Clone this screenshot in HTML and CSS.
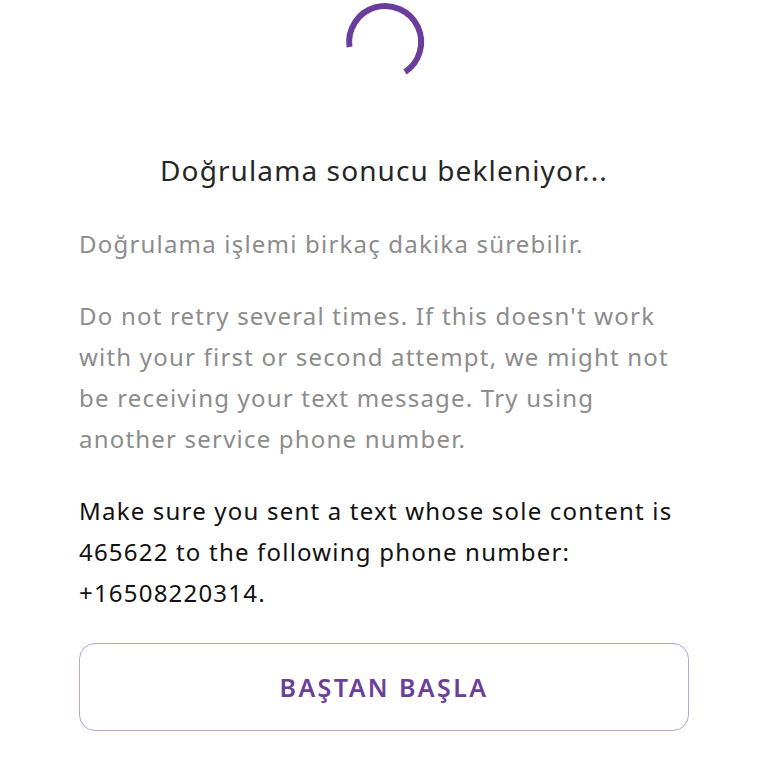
FILE: index.html
```html
<!DOCTYPE html>
<html lang="tr">
<head>
<meta charset="utf-8">
<link rel="stylesheet" href="styles.css">
</head>
<body>
<main class="page">
  <div class="spinner-wrap">
    <svg class="spinner" width="84" height="84" viewBox="0 0 84 84">
      <path d="M 6.5 47 A 36 36 0 1 1 62 72" fill="none" stroke="#6a3d9c" stroke-width="6" stroke-linecap="butt"/>
    </svg>
  </div>
  <h1 class="title">Doğrulama sonucu bekleniyor...</h1>
  <p class="muted">Doğrulama işlemi birkaç dakika sürebilir.</p>
  <p class="muted">Do not retry several times. If this doesn't work with your first or second attempt, we might not be receiving your text message. Try using another service phone number.</p>
  <p class="dark">Make sure you sent a text whose sole content is 465622 to the following phone number: +16508220314.</p>
  <button class="restart">BAŞTAN BAŞLA</button>
</main>
</body>
</html>
```

FILE: styles.css
```css
html, body {
  margin: 0;
  padding: 0;
  background: #ffffff;
}
.page {
  font-family: "Noto Sans", "Open Sans", sans-serif;
  padding: 0 79px;
  display: flex;
  flex-direction: column;
}
.spinner-wrap {
  display: flex;
  justify-content: center;
  height: 84px;
}
.spinner {
  display: block;
  margin-left: 1px;
}
.title {
  margin: 66px 0 0;
  font-size: 28px;
  font-weight: 400;
  line-height: 40px;
  letter-spacing: 1.1px;
  color: #262626;
  text-align: center;
}
.muted, .dark {
  font-size: 24px;
  line-height: 41px;
  letter-spacing: 1.2px;
  margin: 0;
}
.muted {
  color: #8c8c8c;
}
.title + .muted {
  margin-top: 33px;
}
.muted + .muted {
  margin-top: 31px;
}
.dark {
  color: #111111;
  margin-top: 31px;
}
.restart {
  margin-top: 30px;
  height: 88px;
  width: 100%;
  background: #fff;
  border: 1.5px solid #b9a3cf;
  border-radius: 16px;
  font-family: "Noto Sans", "Open Sans", sans-serif;
  font-size: 25px;
  font-weight: 600;
  letter-spacing: 2.4px;
  color: #6b3f98;
  padding: 0;
}
```
